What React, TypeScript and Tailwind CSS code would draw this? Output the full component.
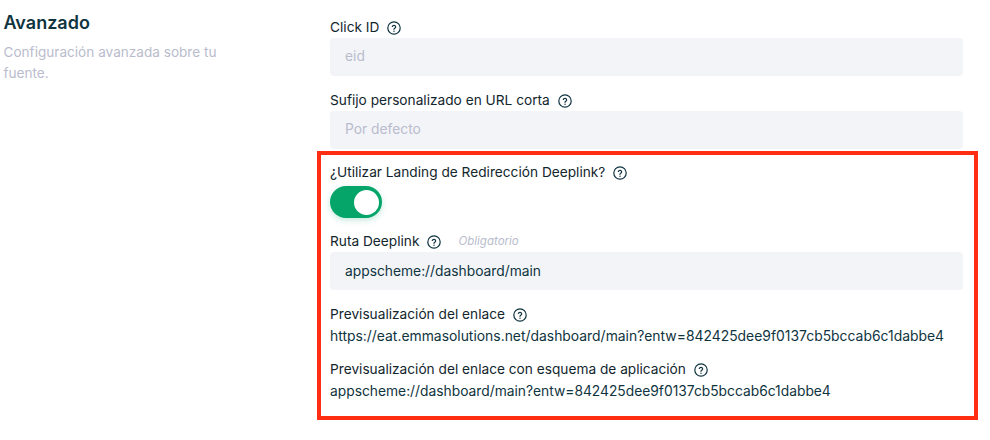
import type { ReactNode } from "react";

// Icono de ayuda junto a las etiquetas
function HelpIcon() {
  return (
    <svg width="14" height="14" viewBox="0 0 14 14" fill="none" className="ml-2 shrink-0 text-[#0f3440]">
      <circle cx="7" cy="7" r="6.2" stroke="currentColor" strokeWidth="1.2" />
      <path
        d="M5.3 5.5a1.75 1.75 0 0 1 3.4.5c0 1.1-1.7 1.4-1.7 2.3"
        stroke="currentColor"
        strokeWidth="1.2"
        strokeLinecap="round"
      />
      <circle cx="7" cy="10.2" r="0.7" fill="currentColor" />
    </svg>
  );
}

function Label({ children, hint }: { children: ReactNode; hint?: string }) {
  return (
    <div className="flex h-[21px] items-center pt-[2px] text-[13.7px] leading-[19px] text-[#12262d]">
      <span>{children}</span>
      <HelpIcon />
      {hint && <span className="ml-[17px] text-[11.5px] italic text-[#b9bccd]">{hint}</span>}
    </div>
  );
}

function Field({ value, muted }: { value: string; muted?: boolean }) {
  return (
    <div
      className={`mt-[1px] flex h-[38px] items-center rounded-[4px] bg-[#f3f4f8] px-[15px] text-[13.8px] ${
        muted ? "pb-[2px] text-[#b9bccd]" : "text-[#0f3440]"
      }`}
    >
      {value}
    </div>
  );
}

function Preview({ label, url, wide }: { label: string; url: string; wide?: boolean }) {
  return (
    <div>
      <Label>{label}</Label>
      <p className={`mt-[2px] leading-[21px] text-[#0f3440] ${wide ? "text-[13.9px]" : "text-[13.8px]"}`}>{url}</p>
    </div>
  );
}

export default function App() {
  return (
    <div className="flex h-[440px] w-[990px] overflow-hidden bg-white font-['Inter',sans-serif]">
      <aside className="w-[330px] shrink-0 pl-[3.5px] pt-[11px]">
        <h2 className="text-[18px] font-semibold leading-[24px] text-[#0f3440]">Avanzado</h2>
        <p className="mt-[7px] w-[230px] text-[13.6px] leading-[21px] text-[#b9bccd]">
          Configuración avanzada sobre tu fuente.
        </p>
      </aside>

      <main className="w-[633px] pt-[16px]">
        <Label>Click ID</Label>
        <Field value="eid" muted />
        <div className="mt-[13px]">
          <Label>Sufijo personalizado en URL corta</Label>
          <Field value="Por defecto" muted />
        </div>

        {/* Recuadro rojo de anotación */}
        <section className="ml-[-13px] mr-[-15px] mt-[2px] h-[269px] border-4 border-[#ff2d12] pl-[9px] pr-[11px] pt-[6px]">
          <Label>¿Utilizar Landing de Redirección Deeplink?</Label>
          <div className="mt-[4px] flex h-[32px] w-[52px] items-center justify-end rounded-full bg-[#05a56a] pr-[3px] shadow-[0_2px_6px_rgba(5,165,106,0.25)]">
            <span className="h-[25px] w-[25px] rounded-full bg-white" />
          </div>
          <div className="mt-[12px]">
            <Label hint="Obligatorio">Ruta Deeplink</Label>
            <Field value="appscheme://dashboard/main" />
          </div>
          <div className="mt-[13px] flex flex-col gap-[11px]">
            <Preview
              wide
              label="Previsualización del enlace"
              url="https://eat.emmasolutions.net/dashboard/main?entw=842425dee9f0137cb5bccab6c1dabbe4"
            />
            <Preview
              label="Previsualización del enlace con esquema de aplicación"
              url="appscheme://dashboard/main?entw=842425dee9f0137cb5bccab6c1dabbe4"
            />
          </div>
        </section>
      </main>
    </div>
  );
}
